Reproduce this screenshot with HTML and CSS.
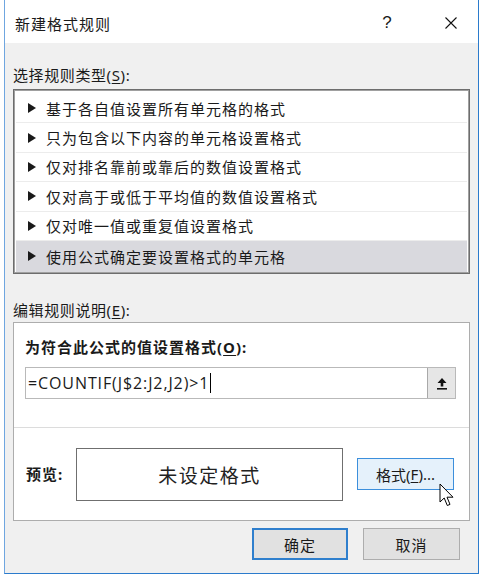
FILE: index.html
```html
<!DOCTYPE html>
<html lang="zh-CN">
<head>
  <meta charset="UTF-8">
  <title>新建格式规则</title>
  <link rel="stylesheet" href="styles.css">
</head>
<body>

<div class="dialog">
  <div class="titlebar">
    <span class="title">新建格式规则</span>
    <span class="help">?</span>
    <span class="close">
      <svg width="12" height="12" viewBox="0 0 12 12">
        <path d="M0.5 0.5 L11.5 11.5 M11.5 0.5 L0.5 11.5" stroke="#111" stroke-width="1.1" fill="none"/>
      </svg>
    </span>
  </div>

  <div class="content">
    <div class="label">选择规则类型(<u>S</u>):</div>
    <div class="rule-list">
      <div class="rule"><i class="tri"></i>基于各自值设置所有单元格的格式</div>
      <div class="rule"><i class="tri"></i>只为包含以下内容的单元格设置格式</div>
      <div class="rule"><i class="tri"></i>仅对排名靠前或靠后的数值设置格式</div>
      <div class="rule"><i class="tri"></i>仅对高于或低于平均值的数值设置格式</div>
      <div class="rule"><i class="tri"></i>仅对唯一值或重复值设置格式</div>
      <div class="rule selected"><i class="tri"></i>使用公式确定要设置格式的单元格</div>
    </div>

    <div class="label label-edit">编辑规则说明(<u>E</u>):</div>
    <div class="desc">
      <div class="formula-part">
        <div class="bold-label">为符合此公式的值设置格式(<u>O</u>):</div>
        <div class="formula">
          <span class="formula-text">=COUNTIF(J$2:J2,J2)&gt;1<span class="caret"></span></span>
          <span class="pick">
            <svg width="12" height="13" viewBox="0 0 12 13">
              <path d="M6 1 L10.5 6 L7.3 6 L7.3 9.5 L4.7 9.5 L4.7 6 L1.5 6 Z" fill="#111"/>
              <rect x="1" y="11" width="10" height="1.6" fill="#111"/>
            </svg>
          </span>
        </div>
      </div>
      <div class="preview-part">
        <span class="bold-label preview-label">预览:</span>
        <div class="preview-box">未设定格式</div>
        <div class="btn btn-format">格式(<u>F</u>)...
          <svg class="cursor" width="16" height="25" viewBox="0 0 16 25">
            <path d="M1 1 L1 19 L5.2 15 L8.3 22.5 L11 21.4 L8 14.2 L14 14.2 Z" fill="#fff" stroke="#000" stroke-width="1" stroke-linejoin="round"/>
          </svg>
        </div>
      </div>
    </div>

    <div class="actions">
      <div class="btn btn-default">确定</div>
      <div class="btn">取消</div>
    </div>
  </div>
</div>

</body>
</html>
```

FILE: styles.css
```css
html, body {
  margin: 0;
  background: #fff;
  font-family: "Noto Sans", "Noto Sans CJK SC", sans-serif;
  color: #1a1a1a;
}
u {
  text-decoration-thickness: 1px;
  text-underline-offset: 2px;
}
.dialog {
  margin-left: 4px;
  width: 475px;
  height: 574px;
  box-sizing: border-box;
  border: 1px solid #6fa6e0;
  border-top: none;
  border-right-color: #2b7bcc;
  border-bottom-color: #2b7bcc;
  background: #f0f0f0;
  display: flex;
  flex-direction: column;
}
.titlebar {
  height: 43px;
  background: #fff;
  display: flex;
  align-items: center;
  padding-left: 10px;
  padding-top: 3px;
  box-sizing: border-box;
}
.title {
  flex: 1;
  font-size: 15px;
  letter-spacing: 1px;
  font-family: "Noto Sans CJK SC", sans-serif;
}
.help {
  width: 46px;
  text-align: center;
  font-size: 17px;
  font-family: "Liberation Sans", sans-serif;
  margin-right: 18px;
}
.close {
  width: 46px;
  margin-right: 4px;
  display: flex;
  justify-content: center;
}
.content {
  flex: 1;
  padding: 0 8px;
}
.label {
  margin-top: 22px;
  height: 20px;
  line-height: 20px;
  font-size: 15px;
  letter-spacing: 0.6px;
}
.label-edit {
  margin-top: 26px;
}
.rule-list {
  margin-top: 4px;
  height: 185px;
  box-sizing: border-box;
  border: 1px solid #6d6d6d;
  box-shadow: inset 0 0 0 1px #a0a0a0;
  background: #fff;
  padding: 4px 2px 0;
}
.rule {
  height: 29.4px;
  box-sizing: border-box;
  border-bottom: 1px solid #ececec;
  display: flex;
  align-items: center;
  padding-left: 12px;
  font-size: 15px;
  letter-spacing: 1px;
  font-family: "Noto Sans CJK SC", sans-serif;
}
.rule.selected {
  background: #d9d9de;
  border-bottom: none;
  height: 31px;
}
.tri {
  width: 0;
  height: 0;
  border-left: 8px solid #1a1a1a;
  border-top: 5px solid transparent;
  border-bottom: 5px solid transparent;
  margin-right: 10px;
}
.desc {
  margin-top: 2px;
  height: 199px;
  box-sizing: border-box;
  border: 1px solid #adadad;
  background: #fff;
  display: flex;
  flex-direction: column;
}
.formula-part {
  padding: 14px 13px 28px 11px;
  border-bottom: 1px solid #dcdcdc;
}
.bold-label {
  height: 20px;
  line-height: 20px;
  font-size: 15px;
  font-weight: bold;
  letter-spacing: 1px;
}
.formula {
  margin-top: 10px;
  height: 32px;
  box-sizing: border-box;
  border: 1px solid #b9b9b9;
  display: flex;
  align-items: stretch;
}
.formula-text {
  flex: 1;
  display: flex;
  align-items: center;
  padding-left: 2px;
  font-size: 16px;
  font-family: "Open Sans", sans-serif;
  letter-spacing: 0.9px;
}
.caret {
  display: inline-block;
  width: 1px;
  height: 20px;
  background: #000;
  margin-left: 1px;
}
.pick {
  width: 27px;
  background: #e6e6e6;
  border-left: 1px solid #a9a9a9;
  display: flex;
  align-items: center;
  justify-content: center;
}
.preview-part {
  flex: 1;
  display: flex;
  align-items: center;
  padding: 0 0 0 12px;
}
.preview-label {
  width: 50px;
}
.preview-box {
  width: 267px;
  height: 53px;
  box-sizing: border-box;
  border: 1px solid #6f6f6f;
  display: flex;
  align-items: center;
  justify-content: center;
  font-size: 19px;
  letter-spacing: 1.5px;
  font-family: "Noto Sans CJK SC", sans-serif;
  color: #222;
}
.btn {
  width: 97px;
  height: 32px;
  box-sizing: border-box;
  border: 1px solid #adadad;
  background: #e1e1e1;
  display: flex;
  align-items: center;
  justify-content: center;
  font-size: 15px;
  letter-spacing: 1px;
}
.btn-format {
  position: relative;
  margin-left: 14px;
  background: #e5f1fb;
  border-color: #3c8fdc;
  letter-spacing: 0;
}
.cursor {
  position: absolute;
  left: 81px;
  top: 24px;
}
.actions {
  margin-top: 7px;
  display: flex;
  justify-content: flex-end;
  gap: 15px;
  padding-right: 10px;
}
.btn-default {
  width: 96px;
  border: 2px solid #2f7fcd;
}
```
